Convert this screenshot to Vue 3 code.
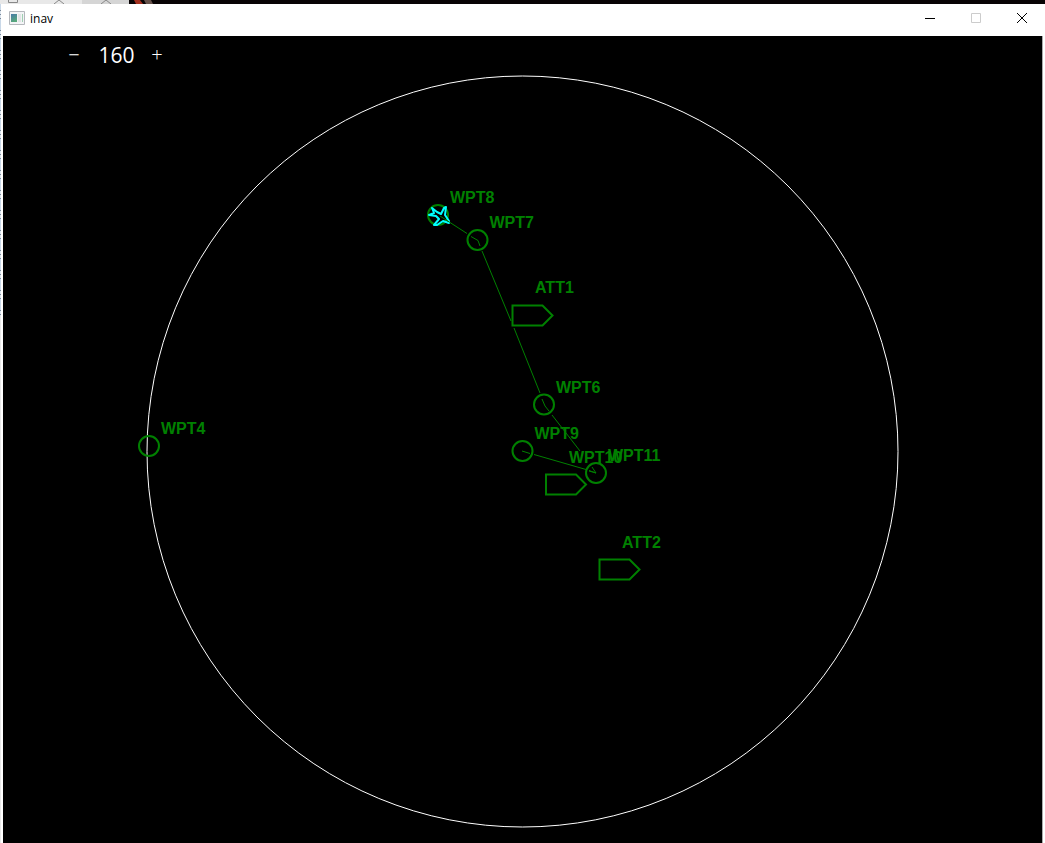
<script setup>
import { ref } from 'vue'

const range = ref(160)
const step = 10

const waypoints = [
  { name: 'WPT8', x: 438, y: 215 },
  { name: 'WPT7', x: 477.5, y: 240 },
  { name: 'WPT6', x: 544, y: 404.5 },
  { name: 'WPT9', x: 522.5, y: 451 },
  { name: 'WPT11', x: 596, y: 473 },
  { name: 'WPT4', x: 149, y: 446 }
]
const targets = [
  { name: 'ATT1', x: 522.5, y: 315.5, lx: 535, ly: 293 },
  { name: 'WPT10', x: 556, y: 484.5, lx: 569, ly: 463 },
  { name: 'ATT2', x: 609.5, y: 569.5, lx: 622, ly: 548 }
]
const legs = [
  'M440 216L467 233.500M471 236.500L478 240.500L480 246M482 251L511 321M514 328L540 393M542 399L545 406L549 411M552 415L580 451M592 467L596 473L589 471',
  'M522 451L530 453.500M534 454.500L586 469.500M589 470.500L596 473'
]
</script>

<template>
  <div class="desktop">
    <div class="behind">
      <svg width="160" height="4" viewBox="0 0 160 4" aria-hidden="true">
        <path d="M0 0H82V4H0Z" fill="#e8e8e8" />
        <path d="M82 0H129V4H82Z" fill="#d5d5d5" />
        <path d="M8.500 0V2.500H17.500V0M54 4L59 0L64 4M101 4L106 0L111 4" fill="none" stroke="#888" />
        <path d="M134 0H140L143 4H136Z" fill="#a33020" />
        <path d="M144 0H151L153 4H146Z" fill="#66524b" />
      </svg>
    </div>
    <div class="window">
      <header class="titlebar">
        <svg class="app-icon" width="16" height="14" viewBox="0 0 16 14" aria-hidden="true">
          <defs>
            <linearGradient id="pane" x1="0" y1="0" x2="0.400" y2="1">
              <stop offset="0" stop-color="#4779a8" />
              <stop offset="1" stop-color="#58a87c" />
            </linearGradient>
          </defs>
          <path d="M.5 .5H15.500V13.500H.5Z" fill="#f3f4f6" stroke="#b4b7bc" />
          <path d="M2 3H8V11H2Z" fill="url(#pane)" />
          <path d="M9 3H12V11H9Z" fill="#e2e5e6" />
          <path d="M13 3H14V11H13Z" fill="#9fcfb2" />
        </svg>
        <h1>inav</h1>
        <div class="controls">
          <button type="button" aria-label="Minimize">
            <svg width="10" height="10" viewBox="0 0 10 10"><path d="M0 5.500H10" /></svg>
          </button>
          <button type="button" aria-label="Maximize" disabled>
            <svg width="10" height="10" viewBox="0 0 10 10"><path d="M.5 .5H9.500V9.500H.5Z" /></svg>
          </button>
          <button type="button" aria-label="Close">
            <svg width="10" height="10" viewBox="0 0 10 10"><path d="M0 0L10 10M10 0L0 10" /></svg>
          </button>
        </div>
      </header>
      <main class="display">
        <div class="range">
          <button type="button" aria-label="Decrease range" @click="range = Math.max(step, range - step)">−</button>
          <output>{{ range }}</output>
          <button type="button" aria-label="Increase range" @click="range += step">+</button>
        </div>
        <svg class="map" viewBox="3 36 1039 807" role="img" aria-label="Navigation display">
          <circle class="ring" cx="522.500" cy="451.500" r="375.500" />
          <g v-for="w in waypoints" :key="w.name">
            <circle class="mark" :cx="w.x" :cy="w.y" r="10" />
            <text :x="w.x + 12" :y="w.y - 12">{{ w.name }}</text>
          </g>
          <g v-for="t in targets" :key="t.name">
            <path class="mark" :d="`M${t.x - 10} ${t.y - 10}h30l10 10l-10 10h-30z`" />
            <text :x="t.lx" :y="t.ly">{{ t.name }}</text>
          </g>
          <path class="plane" d="M449 223L443 221L437 225L434 225L439 219L436 216L429 215L434 213L432 208L437 212L441 214L444 208L446 207L445 215L449 221Z" />
          <path v-for="leg in legs" :key="leg" class="leg" :d="leg" />
        </svg>
      </main>
    </div>
  </div>
</template>

<style>
html,
body,
#app {
  height: 100%;
}
body {
  margin: 0;
  overflow: hidden;
}
</style>

<style scoped>
.desktop {
  height: 100%;
  display: flex;
  flex-direction: column;
  background: #fff;
}
.behind {
  height: 4px;
  flex: none;
  background: #080304;
}
.behind svg {
  display: block;
}
.window {
  flex: 1;
  min-height: 0;
  display: flex;
  flex-direction: column;
  padding: 0 2px 0 3px;
  background:
    repeating-linear-gradient(#c9d8e8 0 6px, #78889a 6px 7px, #dde6ef 7px 10px, #78889a 10px 11px, #dde6ef 11px 14px, #78889a 14px 15px, #c9d8e8 15px 20px) 0 0 / 1px 312px no-repeat,
    linear-gradient(#e8e8e8, #e8e8e8) 0 0 / 1px 100% no-repeat,
    #fff;
}
.titlebar {
  height: 32px;
  flex: none;
  display: flex;
  align-items: center;
  padding-left: 6px;
}
.app-icon {
  margin-bottom: 4px;
}
h1 {
  margin: 0 0 2px 5px;
  font: 12px/16px "Open Sans", "Noto Sans", sans-serif;
  color: #000;
}
.controls {
  margin-left: auto;
  margin-right: -2px;
  display: flex;
  height: 28px;
  align-self: flex-start;
}
.controls button {
  width: 46px;
  padding: 0;
  border: 0;
  background: none;
  display: grid;
  place-items: center;
}
.controls svg {
  fill: none;
  stroke: #000;
}
.controls button:disabled svg {
  stroke: #ccc;
}
.display {
  flex: 1;
  min-height: 0;
  position: relative;
  background: #000;
  border-right: 1px solid #aaa;
}
.map {
  display: block;
  width: 100%;
  height: 100%;
}
.range {
  position: absolute;
  top: 3px;
  left: 60px;
  display: flex;
  align-items: center;
  color: #fff;
  font-family: "Open Sans", "Noto Sans", sans-serif;
}
.range button {
  width: 22px;
  height: 28px;
  padding: 0;
  border: 0;
  background: none;
  color: inherit;
  font: 300 20px/28px "Open Sans", "Noto Sans", sans-serif;
}
.range output {
  width: 61px;
  padding-left: 2px;
  box-sizing: border-box;
  text-align: center;
  font-size: 21px;
  line-height: 32px;
}
.ring {
  fill: none;
  stroke: #fff;
  stroke-width: 1;
}
.leg {
  fill: none;
  stroke: #008000;
  stroke-width: 1;
}
.mark {
  fill: none;
  stroke: #008000;
  stroke-width: 2;
}
.map text {
  fill: #008000;
  font: bold 16px "Liberation Sans", Arial, sans-serif;
}
.plane {
  fill: none;
  stroke: #0ff;
  stroke-width: 2;
  stroke-linejoin: round;
}
</style>
